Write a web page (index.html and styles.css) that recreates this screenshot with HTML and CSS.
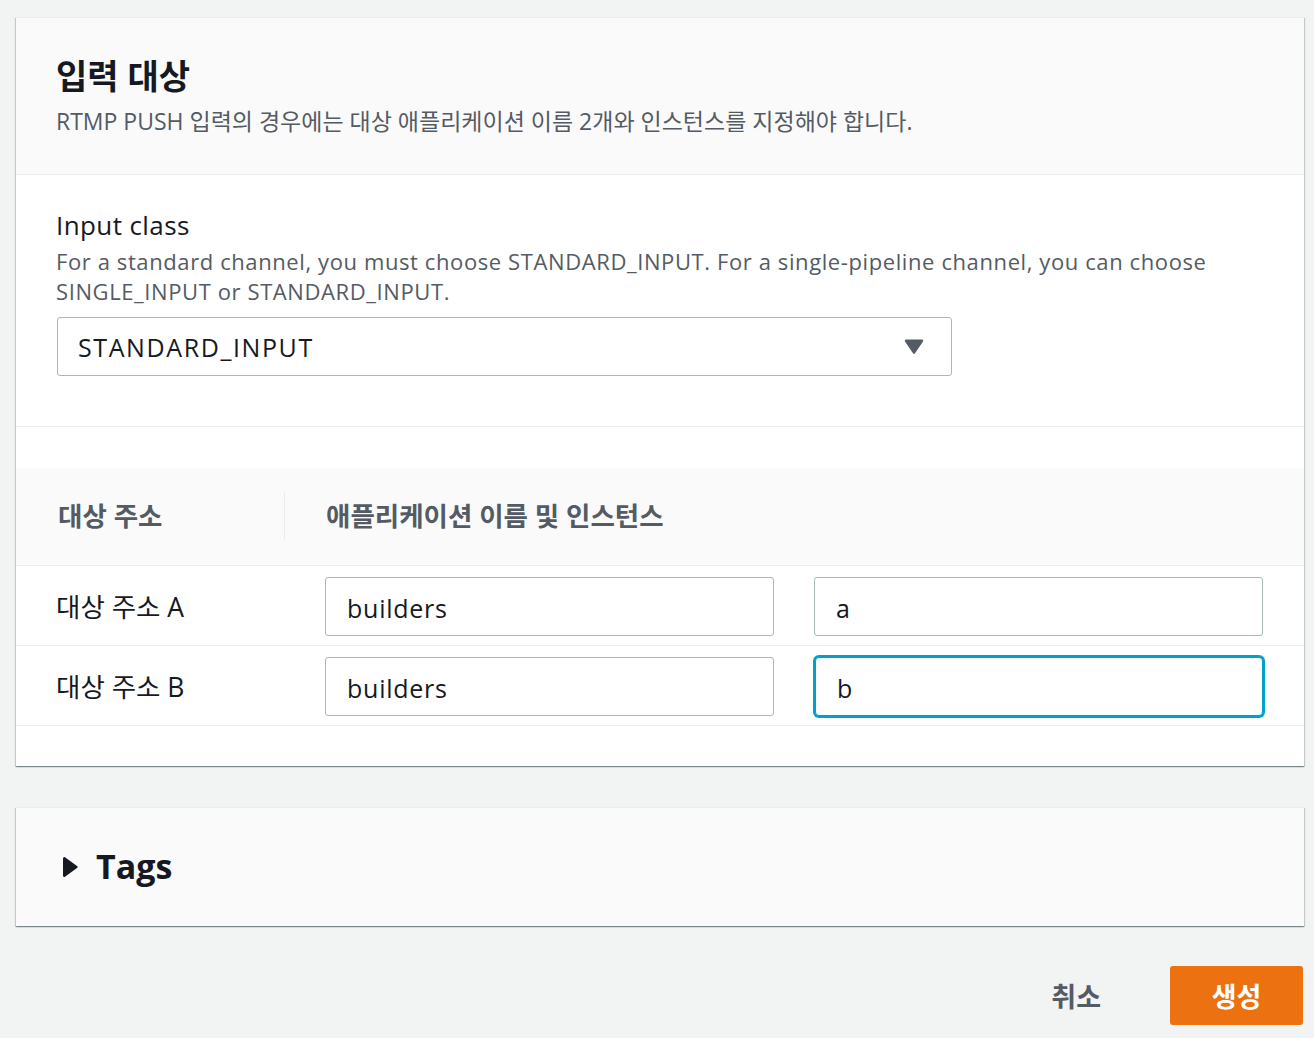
FILE: index.html
```html
<!DOCTYPE html>
<html lang="ko">
<head>
<meta charset="utf-8">
<title>입력 대상</title>
<link rel="stylesheet" href="styles.css">
</head>
<body>
<div class="page">
  <section class="card">
    <header class="card-header">
      <h2 class="card-title">입력 대상</h2>
      <p class="card-desc">RTMP PUSH 입력의 경우에는 대상 애플리케이션 이름 2개와 인스턴스를 지정해야 합니다.</p>
    </header>
    <div class="field-section">
      <div class="field-label">Input class</div>
      <div class="field-desc">For a standard channel, you must choose STANDARD_INPUT. For a single-pipeline channel, you can choose SINGLE_INPUT or STANDARD_INPUT.</div>
      <div class="select">
        <span class="select-value">STANDARD_INPUT</span>
        <svg class="caret" width="20" height="17" viewBox="0 0 20 17"><path d="M2 1.5 H18 a1.2 1.2 0 0 1 1 1.9 L11 15.2 a1.2 1.2 0 0 1 -2 0 L1 3.4 a1.2 1.2 0 0 1 1 -1.9 Z" fill="#545b64"/></svg>
      </div>
    </div>
    <div class="table">
      <div class="table-head">
        <div class="th th-first">대상 주소</div>
        <div class="th th-wide">애플리케이션 이름 및 인스턴스</div>
      </div>
      <div class="table-row">
        <div class="row-label">대상 주소 A</div>
        <div class="input">builders</div>
        <div class="input">a</div>
      </div>
      <div class="table-row">
        <div class="row-label">대상 주소 B</div>
        <div class="input">builders</div>
        <div class="input input-focus">b</div>
      </div>
    </div>
  </section>

  <section class="card card-tags">
    <div class="tags-head">
      <svg class="tags-caret" width="16" height="22" viewBox="0 0 16 22"><path d="M1 2.2 a1.3 1.3 0 0 1 2 -1 L15 9.9 a1.4 1.4 0 0 1 0 2.2 L3 20.8 a1.3 1.3 0 0 1 -2 -1 Z" fill="#16191f"/></svg>
      <span class="tags-title">Tags</span>
    </div>
  </section>

  <div class="actions">
    <button class="btn btn-link">취소</button>
    <button class="btn btn-primary">생성</button>
  </div>
</div>
</body>
</html>
```

FILE: styles.css
```css
* { box-sizing: border-box; }

html, body {
  margin: 0;
  padding: 0;
  background: #f2f3f3;
}

body {
  font-family: "Open Sans", "Noto Sans CJK KR", sans-serif;
  color: #16191f;
}

.page {
  padding: 17px 10px 0 16px;
}

.card {
  background: #ffffff;
  border-top: 1px solid #eaeded;
  box-shadow: 0 1px 1px 0 rgba(0, 28, 36, 0.3), 1px 1px 1px 0 rgba(0, 28, 36, 0.15), -1px 1px 1px 0 rgba(0, 28, 36, 0.15);
  padding-bottom: 40px;
}

.card-header {
  background: #fafafa;
  border-bottom: 1px solid #eaeded;
  padding: 38px 40px 38px 40px;
}

.card-title {
  margin: 0;
  font-size: 34px;
  line-height: 40px;
  font-weight: 700;
  color: #16191f;
}

.card-desc {
  margin: 10px 0 0 0;
  font-size: 23px;
  line-height: 30px;
  color: #545b64;
}

.field-section {
  padding: 33px 40px 50px 40px;
  border-bottom: 1px solid #eaeded;
}

.field-label {
  font-size: 26px;
  line-height: 34px;
  letter-spacing: 0.4px;
  color: #16191f;
}

.field-desc {
  margin-top: 4px;
  font-size: 22px;
  line-height: 30px;
  letter-spacing: 0.6px;
  color: #545b64;
  max-width: 1200px;
}

.select {
  margin-top: 11px;
  margin-left: 1px;
  width: 895px;
  height: 59px;
  border: 1px solid #aab7b8;
  border-radius: 3px;
  display: flex;
  align-items: center;
  justify-content: space-between;
  padding: 0 27px 0 20px;
  background: #fff;
}

.select-value {
  font-size: 25px;
  letter-spacing: 1.6px;
  color: #16191f;
}

.caret { display: block; }

.table {
  margin-top: 41px;
}

.table-head {
  background: #fafafa;
  border-bottom: 1px solid #eaeded;
  display: grid;
  grid-template-columns: 229px 448px 448px;
  column-gap: 41px;
  padding: 24px 40px 25px 40px;
  align-items: center;
}

.th {
  height: 48px;
  display: flex;
  align-items: center;
  padding-bottom: 4px;
  font-size: 26.5px;
  font-weight: 700;
  color: #545b64;
}

.th-first {
  border-right: 1px solid #eaeded;
  padding-left: 2px;
}

.th-wide {
  grid-column: 2 / 4;
}

.table-row {
  display: grid;
  grid-template-columns: 229px 448px 448px;
  column-gap: 41px;
  align-items: center;
  padding: 11px 40px 9px 40px;
  border-bottom: 1px solid #eaeded;
}

.row-label {
  font-size: 26.5px;
  color: #16191f;
  padding-bottom: 2px;
}

.input {
  height: 59px;
  margin-left: -1px;
  border: 1px solid #aab7b8;
  border-radius: 3px;
  display: flex;
  align-items: center;
  padding: 2px 20px 0 21px;
  font-size: 25px;
  letter-spacing: 0.75px;
  color: #16191f;
  background: #fff;
}

.input-focus {
  margin-left: 0;
  border-color: #00a1c9;
  box-shadow: 0 0 0 2px #00a1c9;
  border-radius: 4px;
}

.card-tags {
  margin-top: 41px;
  padding: 0;
}

.tags-head {
  display: flex;
  align-items: center;
  gap: 18px;
  padding: 36px 40px 36px 46px;
  background: #fafafa;
  height: 118px;
}

.tags-caret { display: block; }

.tags-title {
  font-size: 34px;
  font-weight: 700;
  color: #16191f;
  line-height: 46px;
  padding-bottom: 2px;
}

.actions {
  margin-top: 40px;
  display: flex;
  justify-content: flex-end;
  align-items: center;
  gap: 40px;
  padding-right: 1px;
}

.btn {
  font-family: "Open Sans", "Noto Sans CJK KR", sans-serif;
  font-size: 27px;
  font-weight: 700;
  border: none;
  height: 59px;
  border-radius: 3px;
  cursor: pointer;
}

.btn-link {
  background: transparent;
  color: #545b64;
  padding: 0 29px;
}

.btn-primary {
  background: #ec7211;
  color: #ffffff;
  width: 133px;
}
```
